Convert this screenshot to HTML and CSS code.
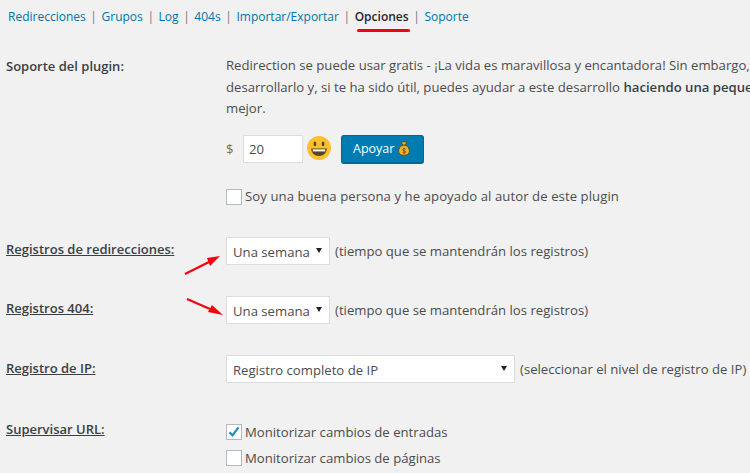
FILE: index.html
```html
<!DOCTYPE html>
<html lang="es">
<head>
<meta charset="utf-8">
<title>Redirection - Opciones</title>
<link rel="stylesheet" href="styles.css">
</head>
<body>
<nav class="tabs">
  <a href="#">Redirecciones</a><span class="sep">|</span>
  <a href="#">Grupos</a><span class="sep">|</span>
  <a href="#">Log</a><span class="sep">|</span>
  <a href="#">404s</a><span class="sep">|</span>
  <a href="#">Importar/Exportar</a><span class="sep">|</span>
  <a href="#" class="current">Opciones</a><span class="sep">|</span>
  <a href="#">Soporte</a>
</nav>
<main class="form">
  <section class="row row-support">
    <h3 class="label plain">Soporte del plugin:</h3>
    <div class="field">
      <p class="intro">Redirection se puede usar gratis - ¡La vida es maravillosa y encantadora! Sin embargo,<br>desarrollarlo y, si te ha sido útil, puedes ayudar a este desarrollo <strong>haciendo una pequeña</strong><br>mejor.</p>
      <div class="donate">
        <span class="dollar">$</span>
        <span class="input">20</span>
        <svg class="smiley" width="24" height="24" viewBox="0 0 26 26" aria-hidden="true">
          <circle cx="13" cy="13" r="13" fill="#fbc02d"/>
          <ellipse cx="8.6" cy="8.6" rx="1.5" ry="2.6" fill="#5b4420"/>
          <ellipse cx="17.4" cy="8.6" rx="1.5" ry="2.6" fill="#5b4420"/>
          <path d="M4.6 13.6h16.8c0 5-3.6 8-8.4 8s-8.4-3-8.4-8z" fill="#5b4420"/>
          <path d="M6.2 14.5h13.6v2.2H6.2z" fill="#fff"/>
        </svg>
        <button class="btn" type="button">Apoyar
          <svg class="bag" width="14" height="15" viewBox="0 0 14 18" aria-hidden="true">
            <path d="M4 1h6L8.8 5c3 1.5 4.7 4.2 4.7 7.2 0 3.4-2.6 4.8-6.5 4.8S.5 15.6.5 12.2C.5 9.2 2.200 6.500 5.200 5z" fill="#f0b429" stroke="#5a4318" stroke-width="1"/>
            <rect x="4.500" y="4.300" width="5" height="1.300" fill="#5a4318"/>
            <path d="M7 8v7M8.800 9.500c-1-.8-3.300-.6-3.300.8 0 1.800 3.500 1 3.500 2.900 0 1.400-2.600 1.500-3.800.6" fill="none" stroke="#5a4318" stroke-width=".9"/>
          </svg>
        </button>
      </div>
      <label class="check check-first"><span class="box"></span><span class="long-text">Soy una buena persona y he apoyado al autor de este plugin</span></label>
    </div>
  </section>
  <section class="row row-logs">
    <h3 class="label">Registros de redirecciones:</h3>
    <div class="field inline">
      <span class="select short">Una semana<i class="caret"></i></span>
      <span class="note">(tiempo que se mantendrán los registros)</span>
    </div>
  </section>
  <section class="row row-404">
    <h3 class="label">Registros 404:</h3>
    <div class="field inline">
      <span class="select short">Una semana<i class="caret"></i></span>
      <span class="note">(tiempo que se mantendrán los registros)</span>
    </div>
  </section>
  <section class="row row-ip">
    <h3 class="label">Registro de IP:</h3>
    <div class="field inline">
      <span class="select long">Registro completo de IP<i class="caret"></i></span>
      <span class="note">(seleccionar el nivel de registro de IP)</span>
    </div>
  </section>
  <section class="row row-url">
    <h3 class="label">Supervisar URL:</h3>
    <div class="field stack">
      <label class="check"><span class="box checked">
        <svg width="14" height="14" viewBox="0 0 14 14" aria-hidden="true"><path d="M2.500 7.200l3 3.200 6-8" fill="none" stroke="#1e8cbe" stroke-width="2.200"/></svg>
      </span>Monitorizar cambios de entradas</label>
      <label class="check check-gap"><span class="box"></span>Monitorizar cambios de páginas</label>
    </div>
  </section>
</main>
<span class="tab-underline"></span>
<svg class="arrows" width="60" height="70" viewBox="0 0 60 70" aria-hidden="true">
  <path d="M1 20 L25 8" stroke="#f5000f" stroke-width="2.200" fill="none"/>
  <path d="M36 2 L23 4 L26 12z" fill="#f5000f"/>
  <path d="M3 45 L26 55" stroke="#f5000f" stroke-width="2.200" fill="none"/>
  <path d="M39 61 L28 51 L24 58z" fill="#f5000f"/>
</svg>
</body>
</html>
```

FILE: styles.css
```css
* { box-sizing: border-box; }
html, body { height: 100%; }
body {
  margin: 0;
  width: 750px;
  height: 473px;
  overflow: hidden;
  position: relative;
  background: #f1f1f1;
  color: #4c4c4c;
  font: 13.15px/1.4 "Open Sans", sans-serif;
}
.tabs {
  display: flex;
  align-items: center;
  height: 18px;
  margin: 8px 0 0 8px;
  white-space: nowrap;
  font-size: 12px;
}
.tabs a { color: #0073aa; text-decoration: none; }
.tabs a.current { color: #23282d; font-weight: 600; font-size: 12px; }
.sep { color: #777; margin: 0 4.6px; }
.form { display: block; padding-left: 6px; }
.row { display: grid; grid-template-columns: 220px 1fr; }
.label {
  margin: 0;
  font-size: 13px;
  font-weight: 600;
  color: #3a3f44;
  text-decoration: underline;
  white-space: nowrap;
}
.label.plain { text-decoration: none; margin-top: 2px; }
.field { min-width: 0; white-space: nowrap; }
.inline { display: flex; align-items: center; gap: 5px; }
.row-support { margin-top: 29px; }
.intro { margin: 0; line-height: 21.5px; }
.intro strong { font-weight: 600; color: #3a3f44; }
.donate { display: flex; align-items: flex-start; margin-top: 15px; height: 29px; }
.dollar { color: #8a6d4a; width: 17px; line-height: 28px; }
.input {
  width: 60px;
  height: 28px;
  padding: 0 5px;
  background: #fff;
  border: 1px solid #ddd;
  line-height: 26px;
}
.smiley { margin: 1px 0 0 4px; }
.btn {
  display: inline-flex;
  align-items: center;
  gap: 3px;
  margin-left: 10px;
  width: 83px;
  height: 29px;
  padding: 0 0 0 11px;
  background: #007cb2;
  border: 1px solid #006799;
  border-bottom-width: 2px;
  border-radius: 3px;
  color: #fff;
  font: 12.5px "Open Sans", sans-serif;
}
.check { display: flex; align-items: center; height: 20px; }
.check-first { margin-top: 23px; }
.long-text { letter-spacing: 0.07px; }
.check-gap { margin-top: 6px; }
.stack { padding-top: 2px; }
.box {
  flex: none;
  width: 16px;
  height: 16px;
  margin-right: 3px;
  background: #fff;
  border: 1px solid #b4b9be;
  display: flex;
  align-items: center;
  justify-content: center;
}
.select {
  position: relative;
  display: block;
  height: 28px;
  padding: 0 6px;
  background: #fff;
  border: 1px solid #ddd;
  line-height: 28px;
  color: #4c4c4c;
}
.select.short { width: 104px; }
.select.long { width: 289px; }
.caret {
  position: absolute;
  right: 7px;
  top: 10px;
  border-style: solid;
  border-width: 5px 3px 0;
  border-color: #222 transparent transparent;
}
.row-logs { margin-top: 30.5px; }
.row-404 { margin-top: 31px; }
.row-ip { margin-top: 31px; }
.row-url { margin-top: 37px; }
.row-logs .label, .row-404 .label { margin-top: 3px; }
.row-ip .label { margin-top: 4px; }
.tab-underline {
  position: absolute;
  left: 357px;
  top: 29px;
  width: 53px;
  height: 3px;
  background: #f5000f;
  border-radius: 2px;
}
.arrows { position: absolute; left: 184px; top: 254px; }
```
